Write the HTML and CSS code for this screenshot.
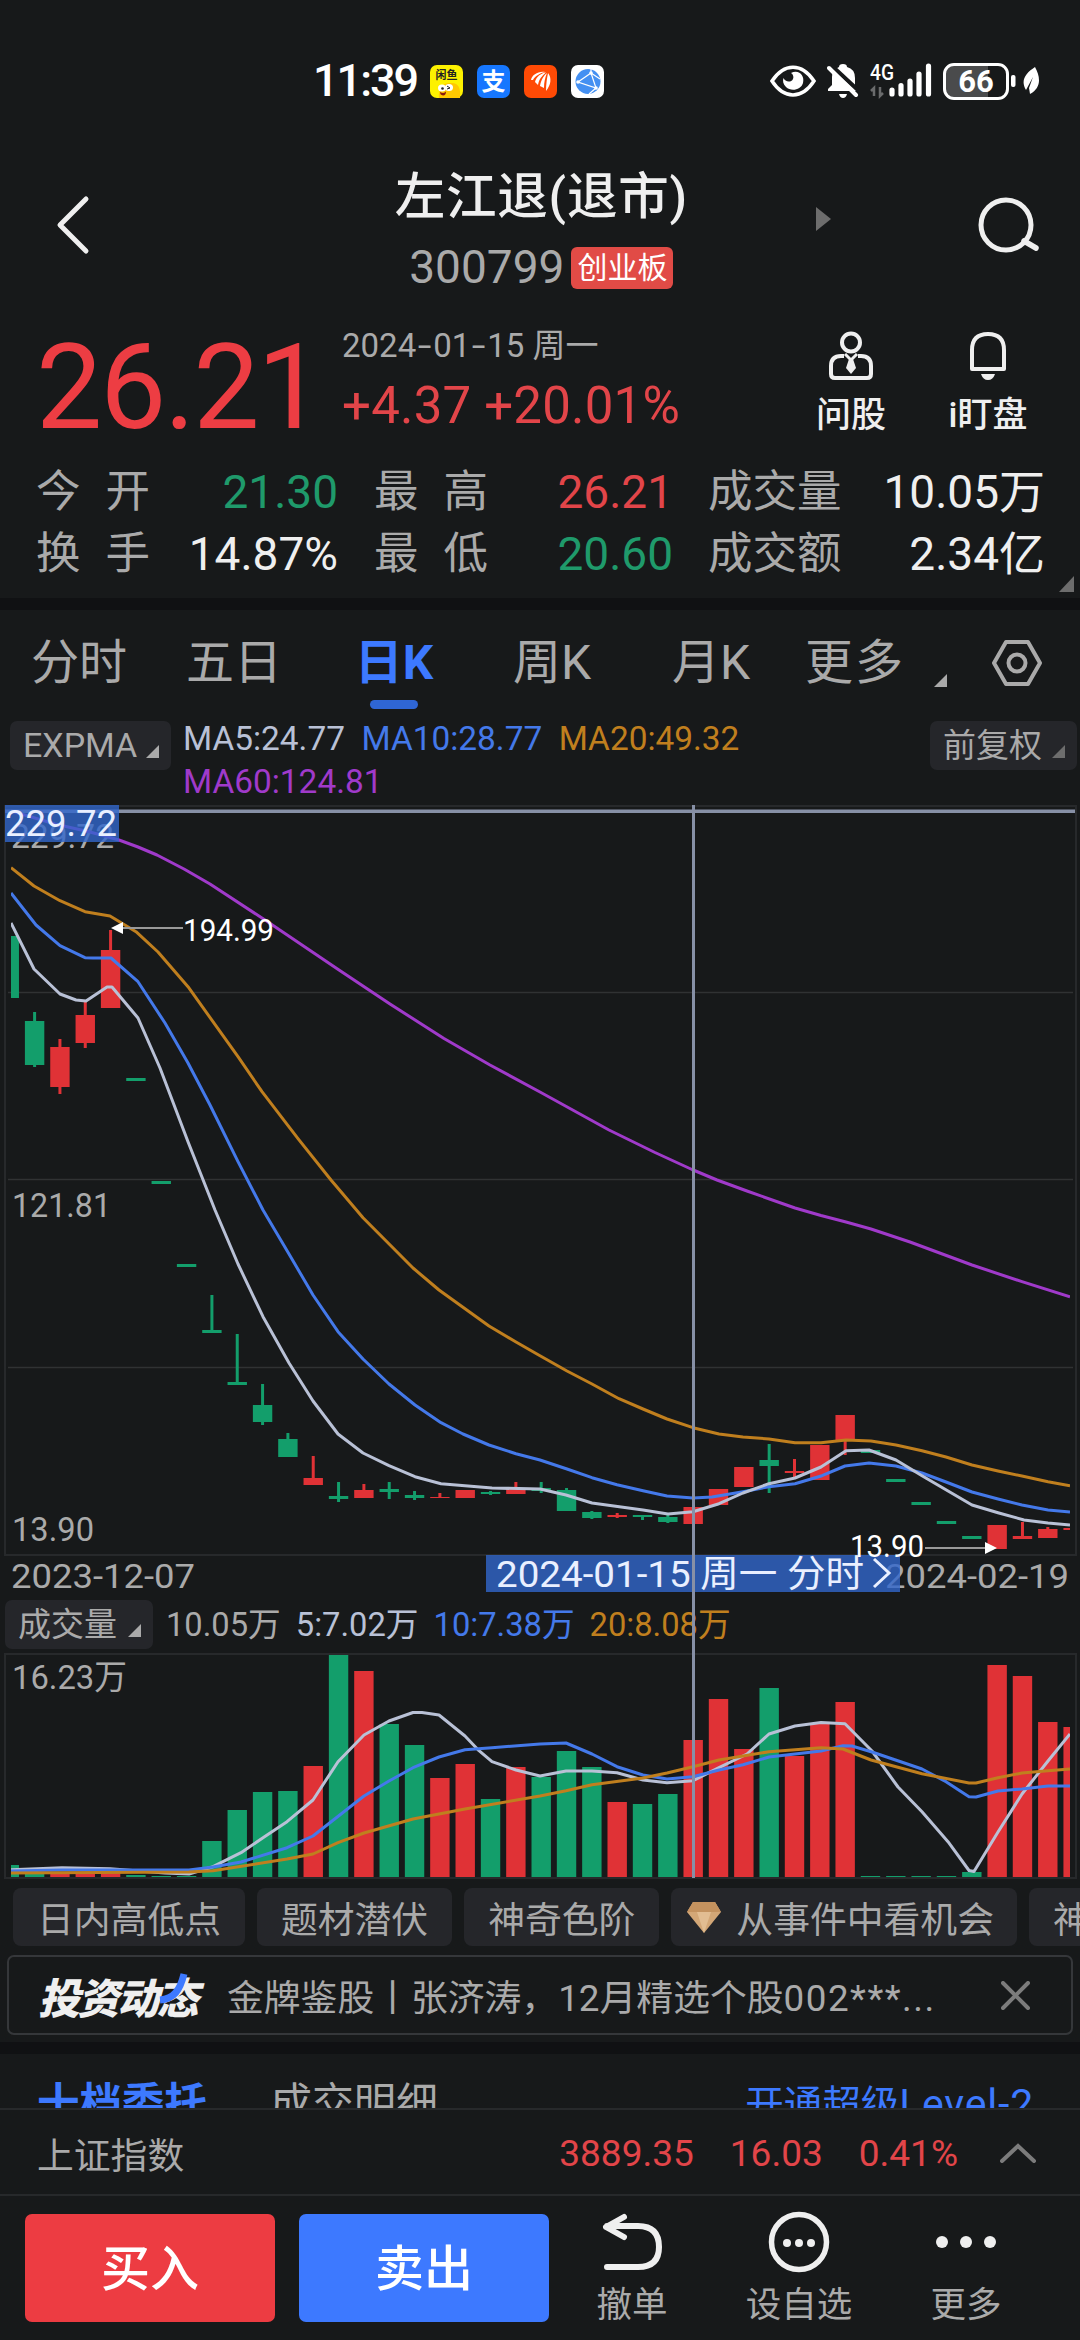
FILE: index.html
```html
<!DOCTYPE html>
<html lang="zh-CN">
<head>
    <meta charset="utf-8">
    <meta name="viewport" content="width=device-width, initial-scale=1.0">
    <title>左江退 300799</title>
    <link rel="stylesheet" href="styles.css">
</head>
<body>
<div class="statusbar">
    <div class="clock">11:39</div>
    <div class="apps">
        <svg width="33" height="33" viewBox="0 0 33 33">
            <rect width="33" height="33" rx="7" fill="#fdf100"/>
            <path d="M9 33C8 24 12 18 20 18C28 17 31 22 30 33Z" fill="#ffc800"/>
            <text x="5.5" y="14" class="xy" textLength="22">闲鱼</text>
            <ellipse cx="12" cy="23" rx="4" ry="3.6" fill="#fff"/><ellipse cx="19" cy="22.5" rx="4" ry="3.6" fill="#fff"/>
            <circle cx="12.5" cy="23.5" r="1.3" fill="#222"/><path d="M17 21l3 2-3 1" stroke="#222" fill="none"/>
            <path d="M10 27q4 2 6-.5q0 4-3 4q-3-.5-3-3.5" fill="#8a1a10"/>
        </svg>
        <svg width="33" height="33" viewBox="0 0 33 33">
            <rect width="33" height="33" rx="7" fill="#1677ff"/>
            <text x="4.5" y="25" class="zfb">支</text>
        </svg>
        <svg width="33" height="33" viewBox="0 0 33 33">
            <rect width="33" height="33" rx="7" fill="#ff4a05"/>
            <path d="M7 15C8 10 14 6 21 7C16 8 11 11 9 15ZM11 17C12 12 17 8 22 7.5C18 11 15 14 14 20ZM16 21C17 15 20 10 23 8C21 13 20 17 20 23ZM22 26C22 19 23 13 24 8C28 13 27 20 22 26Z" fill="#fff"/>
        </svg>
        <svg width="33" height="33" viewBox="0 0 33 33">
            <rect width="33" height="33" rx="7" fill="#fff"/>
            <circle cx="17" cy="16.5" r="12.5" fill="#4490f2"/>
            <path d="M7 17L20 8L25 23Z M20 4V8L29 14M25 23L18 29" fill="none" stroke="#fff" stroke-width="1.2"/>
            <circle cx="7" cy="17" r="1.8" fill="#fff"/><circle cx="20" cy="8" r="1.8" fill="#fff"/><circle cx="25" cy="23" r="1.8" fill="#fff"/>
        </svg>
    </div>
    <div class="sysicons">
        <svg width="46" height="32" viewBox="0 0 46 32">
            <path d="M2 16C14-2.5 32-2.5 44 16C32 34.5 14 34.5 2 16Z" fill="none" stroke="#fff" stroke-width="3.5"/>
            <path d="M21 8C29 4 35 11 33 18C31 25 21 27 16 22C13 19 12.5 16 13.5 13C15 17 21 18 23 14C24 12 23 9 21 8Z" fill="#fff"/>
        </svg>
        <svg class="mute" width="32" height="36" viewBox="0 0 32 36">
            <path d="M12 4Q12 1 16 1Q20 1 20 4Q28 6 28 15V24L31 28H1V26L5 22V14Q5 7 12 4Z" fill="#fff"/>
            <path d="M12 31H20Q19 35 16 35Q13 35 12 31Z" fill="#fff"/>
            <path d="M4 2L33 29" stroke="#17191a" stroke-width="4"/>
            <path d="M2 5L29 32" stroke="#fff" stroke-width="4" stroke-linecap="round"/>
        </svg>
        <svg class="signal" width="64" height="36" viewBox="0 0 64 36">
            <text x="0" y="17" class="net" textLength="24" lengthAdjust="spacingAndGlyphs">4G</text>
            <path d="M4 33V25L1 28M10 24V33L13 30" fill="none" stroke="#6a6b6c" stroke-width="2.5"/>
            <path d="M22 27V31M31 22.5V31M40 18V31M49 11V31M58.5 3V31" stroke="#fff" stroke-width="5.2" stroke-linecap="round"/>
        </svg>
        <div class="battery">66</div>
        <svg class="nub" width="5" height="12"><rect width="4.5" height="12" rx="2" fill="#fff"/></svg>
        <svg width="18" height="30" viewBox="0 0 18 30">
            <path d="M13 1C19 12 19 22 8 28L7 22L11 11L4 24C-2 14 4 7 13 1Z" fill="#fff"/>
        </svg>
    </div>
</div>

<div class="header">
    <svg class="back" width="34" height="60" viewBox="0 0 34 60"><path d="M30 4L4 30L30 56" fill="none" stroke="#efefef" stroke-width="5" stroke-linecap="round" stroke-linejoin="round"/></svg>
    <div class="heading">
        <div class="name">左江退(退市)</div>
        <div class="code">300799<span class="board">创业板</span></div>
    </div>
    <svg class="next" width="15" height="24"><path d="M0 0L15 12L0 24Z" fill="#6d6d6d"/></svg>
    <svg class="search" width="62" height="60" viewBox="0 0 62 60"><circle cx="28" cy="30" r="25" fill="none" stroke="#efefef" stroke-width="5"/><path d="M46 46L58 53" stroke="#efefef" stroke-width="5.5" stroke-linecap="round"/></svg>
</div>

<div class="quote">
    <div class="price">26.21</div>
    <div class="change">
        <div class="date">2024<i>-</i>01<i>-</i>15 周一</div>
        <div class="diff">+4.37 +20.01%</div>
    </div>
    <div class="action ask">
        <svg width="46" height="50" viewBox="0 0 46 50" fill="none" stroke="#efefef" stroke-width="4">
            <circle cx="23" cy="11.5" r="9"/>
            <path d="M16 25H13Q3 25 3 35V43Q3 47 7 47H39Q43 47 43 43V35Q43 25 33 25H30"/>
            <path d="M21 28H25L28 37L23 43L18 37Z" fill="#efefef" stroke="none"/>
            <path d="M17 23L23 29L29 23" stroke-width="3"/>
        </svg>
        <span>问股</span>
    </div>
    <div class="action watch">
        <svg width="46" height="50" viewBox="0 0 46 50" fill="none" stroke="#efefef" stroke-width="4">
            <path d="M7 38V19Q7 3 23 3Q39 3 39 19V38Z" stroke-linejoin="round"/>
            <path d="M16 43H30Q28 49 23 49Q18 49 16 43Z" fill="#efefef" stroke="none"/>
        </svg>
        <span>i盯盘</span>
    </div>
</div>

<div class="stats">
    <div><label class="two">今开</label><b class="down">21.30</b></div>
    <div><label class="two">最高</label><b class="up">26.21</b></div>
    <div><label>成交量</label><b>10.05万</b></div>
    <div><label class="two">换手</label><b>14.87%</b></div>
    <div><label class="two">最低</label><b class="down">20.60</b></div>
    <div><label>成交额</label><b>2.34亿</b></div>
    <svg class="corner" width="15" height="16"><path d="M15 0V16H0Z" fill="#6d6d6d"/></svg>
</div>
<div class="band"></div>

<div class="tabs">
    <div>分时</div>
    <div>五日</div>
    <div class="on">日K</div>
    <div>周K</div>
    <div>月K</div>
    <div class="more">更多</div>
    <svg class="tri" width="13" height="13"><path d="M13 0V13H0Z" fill="#aaa"/></svg>
    <svg width="50" height="48" viewBox="0 0 50 48" fill="none" stroke="#aaa" stroke-width="4">
        <path d="M14 3H36L48 24L36 45H14L2 24Z" stroke-linejoin="round"/><circle cx="25" cy="24" r="8.5"/>
    </svg>
</div>

<div class="indicators">
    <div class="chip">EXPMA<svg width="13" height="13"><path d="M13 0V13H0Z" fill="#aaa"/></svg></div>
    <div class="ma">
        <span class="c5">MA5:24.77</span><span class="c10">MA10:28.77</span><span class="c20">MA20:49.32</span><br>
        <span class="c60">MA60:124.81</span>
    </div>
    <div class="chip adj">前复权<svg width="13" height="13"><path d="M13 0V13H0Z" fill="#6d6d6d"/></svg></div>
</div>

<div class="charts">
    <svg id="kline" width="1080" height="800" viewBox="0 797 1080 800"></svg>
    <div class="volhead">
        <div class="chip">成交量<svg width="13" height="13"><path d="M13 0V13H0Z" fill="#aaa"/></svg></div>
        <span class="v">10.05万</span><span class="c5">5:7.02万</span><span class="c10">10:7.38万</span><span class="c20">20:8.08万</span>
    </div>
    <svg id="volume" width="1080" height="232" viewBox="0 1650 1080 232"></svg>
    <div class="cross"></div>
</div>

<div class="tags">
    <div>日内高低点</div>
    <div>题材潜伏</div>
    <div>神奇色阶</div>
    <div class="gem"><svg width="34" height="31" viewBox="0 0 34 31"><path d="M6 0H28L34 10L17 31L0 10Z" fill="#d3a777"/><path d="M6 0H28L34 10H0Z" fill="#c4925f"/><path d="M10 10H24L17 31Z" fill="#e2bd92"/></svg>从事件中看机会</div>
    <div>神奇九转</div>
</div>

<div class="notice">
    <div class="logo">投资动态<svg width="36" height="48" viewBox="0 0 36 48"><path d="M28 2C24 18 18 27 4 28" fill="none" stroke="#3d79ff" stroke-width="7"/></svg></div>
    <div class="news">金牌鉴股丨张济涛，12月精选个股<span>002***...</span></div>
    <svg width="29" height="29" viewBox="0 0 29 29"><path d="M2 2L27 27M27 2L2 27" stroke="#7c7c7c" stroke-width="4" stroke-linecap="round"/></svg>
</div>
<div class="band band2"></div>

<div class="depth">
    <div class="on">十档委托</div>
    <div>成交明细</div>
    <div class="level">开通超级<span>Level-2</span></div>
</div>

<div class="index">
    <div class="label">上证指数</div>
    <div class="n1">3889.35</div>
    <div class="n2">16.03</div>
    <div class="n3">0.41%</div>
    <svg width="36" height="20" viewBox="0 0 36 20"><path d="M2 18L18 3L34 18" fill="none" stroke="#7c7c7c" stroke-width="4" stroke-linecap="round"/></svg>
</div>

<div class="trade">
    <div class="btn buy">买入</div>
    <div class="btn sell">卖出</div>
    <div class="op">
        <svg width="60" height="62" viewBox="0 0 60 62" fill="none" stroke="#efefef" stroke-width="6" stroke-linecap="round" stroke-linejoin="round"><path d="M22 6L4 16L22 26M5 15H36Q57 15 57 36Q57 56 36 56H5"/></svg>
        <span>撤单</span>
    </div>
    <div class="op opt">
        <svg width="62" height="62" viewBox="0 0 62 62"><circle cx="31" cy="31" r="27.5" fill="none" stroke="#efefef" stroke-width="5.5"/><g fill="#efefef"><circle cx="19" cy="32" r="4"/><circle cx="31" cy="32" r="4"/><circle cx="43" cy="32" r="4"/></g></svg>
        <span>设自选</span>
    </div>
    <div class="op">
        <svg width="62" height="62" viewBox="0 0 62 62" fill="#efefef"><circle cx="7" cy="31" r="6"/><circle cx="31" cy="31" r="6"/><circle cx="55" cy="31" r="6"/></svg>
        <span>更多</span>
    </div>
</div>
<script src="chart.js"></script>
</body>
</html>
```
FILE: styles.css
```css
*{
    box-sizing: border-box;
}
body{
    margin: 0;
    width: 1080px;
    height: 2340px;
    overflow: hidden;
    background-color: #17191a;
    color: #efefef;
    font-family: Roboto, "Noto Sans CJK SC", sans-serif;
}
svg{
    display: block;
    flex: none;
}
div, span, label, b{
    white-space: nowrap;
}
.up{ color: #e24549; }
.down{ color: #1f9a6b; }
.c5{ color: #b9c1d6; }
.c10{ color: #4479ea; }
.c20{ color: #c07f1e; }
.c60{ color: #a03aca; }

/* status bar */
.statusbar{
    height: 162px;
    display: flex;
    align-items: center;
    padding-left: 313px;
    color: #fff;
}
.clock{
    width: 117px;
    font-size: 45px;
    font-weight: 500;
    line-height: 60px;
    letter-spacing: -2px;
}
.apps{
    display: flex;
    gap: 14px;
}
.xy{
    font: bold 11px "Noto Sans CJK SC", sans-serif;
    fill: #222;
}
.zfb{
    font: bold 24px "Noto Sans CJK SC", sans-serif;
    fill: #fff;
}
.sysicons{
    display: flex;
    align-items: center;
    margin-left: 166px;
}
.mute{ margin-left: 11px; }
.signal{ margin-left: 11px; }
.net{
    font: 500 22px Roboto, sans-serif;
    fill: #fff;
}
.battery{
    width: 66px;
    height: 37px;
    margin-left: 9px;
    border: 3px solid #fff;
    border-radius: 11px;
    background: linear-gradient(90deg, #4a4b4c 70%, #17191a 70%);
    text-align: center;
    font-size: 31px;
    font-weight: 700;
    line-height: 31px;
}
.nub{ margin: 0 6px 0 2px; }

/* header */
.header{
    height: 158px;
    position: relative;
    display: flex;
    justify-content: space-between;
    padding: 0 40px 0 56px;
}
.back, .search{ margin-top: 33px; }
.heading{
    width: 300px;
    margin-left: 299px;
}
.name{
    font-size: 50.5px;
    font-weight: 500;
    line-height: 69px;
    text-align: center;
    letter-spacing: 0.8px;
}
.code{
    display: flex;
    align-items: center;
    justify-content: center;
    margin-top: 15px;
    color: #aaa;
    font-size: 46px;
    line-height: 43px;
    gap: 7px;
}
.board{
    width: 102px;
    height: 42px;
    border-radius: 6px;
    background-color: #e14b46;
    color: #fff;
    font-size: 30px;
    text-align: center;
    line-height: 41px;
}
.next{
    margin: 45px 0 0 122px;
}
.search{ margin-left: 145px; }

/* quote */
.quote{
    display: flex;
    height: 138px;
    padding-left: 36px;
}
.price{
    width: 306px;
    font-size: 118px;
    letter-spacing: -2.2px;
    line-height: 137px;
    color: #ed3d43;
}
.change{ width: 454px; }
.date{
    margin-top: 5px;
    color: #aaa;
    font-size: 33px;
    line-height: 42px;
}
.date i{
    display: inline-block;
    width: 17px;
    transform: scaleX(1.5);
    font-style: normal;
    text-align: center;
}
.diff{
    color: #e24549;
    font-size: 51px;
    line-height: 78px;
    letter-spacing: 0.2px;
}
.action{
    display: flex;
    flex-direction: column;
    align-items: center;
    width: 110px;
    padding-top: 11px;
    font-size: 35px;
    font-weight: 500;
}
.watch{ margin-left: 27px; }
.action span{
    margin-top: 4px;
    line-height: 62px;
}
.stats{
    position: relative;
    height: 140px;
    padding: 3px 0 0 36px;
    display: grid;
    grid-template-columns: 302px 298px 334px;
    grid-template-rows: 62px 62px;
    column-gap: 36px;
}
.stats > div{
    display: flex;
    justify-content: space-between;
    font-size: 46px;
    line-height: 62px;
}
.stats > div:nth-child(3n){ width: 337px; }
.stats > div:nth-child(3n+2){ width: 299px; }
.stats label{
    color: #aaa;
    font-size: 44.5px;
}
.stats .two{ letter-spacing: 25px; }
.stats b{ font-weight: 400; }
.corner{
    position: absolute;
    right: 6px;
    bottom: 6px;
}
.band{
    height: 12px;
    background-color: #101113;
}

/* period tabs */
.tabs{
    display: grid;
    grid-template-columns: 158px 152px 172px 140px 178px 110px 60px 93px;
    height: 105px;
    justify-items: center;
    align-items: center;
    color: #aaa;
    font-size: 48px;
}
.tabs > div{
    line-height: 106px;
}
.tabs .more{ letter-spacing: 2px; }
.tabs .on{
    position: relative;
    left: -2px;
    color: #3d79ff;
    font-weight: 700;
}
.tabs .on::after{
    content: "";
    position: absolute;
    left: 50%;
    bottom: 7px;
    width: 48px;
    height: 9px;
    margin-left: -24px;
    border-radius: 5px;
    background-color: #2f66d4;
}
.tabs .tri{ margin-top: 34px; }

.indicators{
    display: flex;
    height: 82px;
    padding: 0 3px 0 10px;
}
.chip{
    display: flex;
    align-items: center;
    justify-content: space-between;
    width: 161px;
    height: 49px;
    margin-top: 6px;
    padding: 0 12px 0 13px;
    border-radius: 7px;
    background-color: #25262a;
    color: #aaa;
    font-size: 34px;
    line-height: 49px;
}
.chip svg{ margin-top: 12px; }
.ma{
    flex: 1;
    margin-left: 12px;
    padding-top: 2px;
    font-size: 33.4px;
    line-height: 43px;
}
.ma span{ margin-right: 16.5px; }
.adj{ width: 147px; font-size: 33px; }

/* charts */
.charts{ position: relative; }
.charts text{
    font-size: 34px;
    fill: #aaa;
}
.charts .mark{
    font-size: 31px;
    fill: #fff;
}
.charts .hl{
    font-size: 37px;
    fill: #e9efff;
}
.frame{
    fill: none;
    stroke: #27292b;
    stroke-width: 2;
}
.grid{
    stroke: #303233;
    stroke-width: 1.5;
}
.line{
    fill: none;
    stroke-width: 3;
    stroke-linejoin: round;
}
.badge{
    fill: #3267cc;
    fill-opacity: .8;
}
.volhead{
    display: flex;
    height: 53px;
    padding: 3px 0 0 5px;
    font-size: 32.7px;
    line-height: 51px;
}
.volhead .chip{
    width: 148px;
    height: 49px;
    margin: 0 13px 0 0;
    font-size: 33px;
}
.volhead .v{ color: #aaa; }
.volhead span{ margin-right: 15px; }
.cross{
    position: absolute;
    left: 692px;
    top: 8px;
    width: 3px;
    height: 1073px;
    background-color: #8790a6;
}

/* strategy tags */
.tags{
    display: flex;
    gap: 12px;
    padding: 6px 0 0 13px;
    overflow: hidden;
}
.tags > div{
    display: flex;
    align-items: center;
    flex: none;
    height: 58px;
    padding: 0 24px;
    border-radius: 8px;
    background-color: #25262a;
    color: #aaa;
    font-size: 36.8px;
}
.tags .gem{
    gap: 15px;
    padding: 0 23px 0 16px;
}
.notice{
    display: flex;
    align-items: center;
    height: 80px;
    margin: 9px 7px 7px;
    padding: 0 41px 0 29px;
    border: 2px solid #35373a;
    border-radius: 7px;
    color: #aaa;
    font-size: 36.8px;
}
.logo{
    position: relative;
    width: 189px;
    color: #efefef;
    font-size: 42px;
    font-weight: 900;
    font-style: italic;
    letter-spacing: -2.5px;
}
.logo svg{
    position: absolute;
    left: 118px;
    top: 7px;
}
.news{ flex: 1; }
.news span{ letter-spacing: 1.5px; }

.depth{
    display: flex;
    height: 54px;
    overflow: hidden;
    padding: 22px 46px 0 37px;
    color: #aaa;
    font-size: 42px;
    line-height: 56px;
}
.depth .on{
    margin-right: 63px;
    color: #3d79ff;
    font-size: 42.5px;
    font-weight: 700;
}
.level{
    margin-left: auto;
    color: #3d79ff;
    font-size: 38.5px;
}
.level span{
    font-size: 41px;
    letter-spacing: 0.8px;
}
.index{
    display: flex;
    align-items: center;
    height: 88px;
    padding: 2px 44px 0 37px;
    border-top: 2px solid #27292b;
    border-bottom: 2px solid #27292b;
    color: #e24549;
    font-size: 37px;
}
.label{
    flex: 1;
    color: #aaa;
    font-size: 36.8px;
}
.n2{ margin: 0 36px; }
.n3{ margin-right: 42px; }

.trade{
    display: flex;
    height: 144px;
    padding: 15px 0 0 25px;
}
.btn{
    width: 250px;
    height: 108px;
    margin: 3px 24px 0 0;
    border-radius: 7px;
    background-color: #ed3c42;
    color: #fff;
    font-size: 49px;
    font-weight: 500;
    line-height: 111px;
    text-align: center;
}
.sell{ background-color: #3d79ff; }
.op{
    width: 118px;
    display: flex;
    flex-direction: column;
    align-items: center;
    color: #aaa;
    font-size: 35.5px;
    line-height: 64px;
}
.opt{ margin: 0 49px; }
```
FILE: chart.js
```js
var RED = '#e03236', GREEN = '#139e6b';
var BASE = 1877;
// body top, body bottom, wick top, wick bottom, volume top, 1 = up
var days = [
    [936,998,936,998,1865,0],[1021,1065,1012,1067,1873,0],[1047,1087,1039,1094,1873,1],[1015,1043,1000,1048,1873,1],
    [950,1008,930,1008,1873,1],[1078,1081,1078,1081,1875,0],[1181,1184,1181,1184,1876,0],[1264,1267,1264,1267,1876,0],
    [1330,1333,1295,1333,1841,0],[1382,1385,1334,1385,1810,0],[1405,1422,1384,1425,1792,0],[1439,1457,1433,1457,1791,0],
    [1478,1485,1456,1485,1766,1],[1496,1499,1482,1502,1655,0],[1490,1498,1484,1498,1671,1],[1489,1492,1482,1499,1724,0],
    [1495,1498,1491,1500,1745,0],[1497,1498,1493,1498,1778,1],[1490,1498,1490,1498,1764,1],[1492,1494,1491,1495,1799,0],
    [1489,1494,1482,1494,1767,1],[1488,1491,1482,1493,1777,0],[1490,1511,1488,1511,1751,0],[1512,1518,1511,1519,1767,0],
    [1515,1517,1513,1518,1802,1],[1515,1517,1515,1520,1804,0],[1517,1522,1515,1523,1794,0],[1507,1524,1507,1524,1740,1],
    [1489,1505,1489,1505,1699,1],[1467,1487,1467,1487,1749,1],[1460,1466,1444,1493,1688,0],[1471,1473,1459,1477,1756,1],
    [1445,1480,1445,1480,1724,1],[1415,1440,1415,1455,1702,1],[1450,1453,1450,1453,1876,0],[1479,1482,1479,1482,1876,0],
    [1502,1505,1502,1505,1876,0],[1521,1524,1521,1524,1876,0],[1536,1539,1536,1539,1872,0],[1525,1549,1525,1549,1665,1],
    [1536,1539,1522,1539,1676,1],[1529,1538,1527,1538,1722,1],[1528,1530,1528,1530,1727,1]
];
var ma60 = '11,811 55,824 90,832 119,840 138,847 157,855 184,869 210,884 265,920 339,970 390,1004 444,1038.5 490,1065 540,1092 609,1130 655,1152.5 692,1169.5 717,1180 747,1191 795,1208 821,1215.5 846,1222 871,1229 910,1242 972,1265 1022,1281.7 1070,1296.7';
var ma20 = '11,867.7 34,886 60,900.7 85,911.7 110,916 136,931.7 158,952 188,986.7 238,1056.7 262,1091.7 298,1138.7 331,1180 363,1217.7 413,1268 439,1290 489,1326 516,1342 540,1355.7 567,1371 592,1384 619,1398.7 643,1409 667,1419 693,1427.7 719,1434 743,1437 769,1439 795,1442.7 821,1442.7 846,1440 871,1441 896,1445 922,1450.7 946,1457 972,1465 998,1471 1022,1476 1048,1481.7 1070,1485.7';
var ma10 = '11,893 36,925 60,945.7 85,957.7 93,958 111,958 138,981.7 165,1023 188,1063 210,1105 238,1161.7 263,1210 289,1254 313,1295 338,1331.7 363,1359 389,1384 415,1405 441,1422.7 463,1434 489,1445 516,1453.7 540,1460 567,1469 592,1477.7 617,1484.7 643,1490.7 667,1496 693,1498 712,1497 743,1491.7 769,1486.7 795,1483.7 822,1475.7 845,1466 869,1463 896,1466 922,1473 946,1482 972,1492 998,1499 1022,1505 1048,1510 1070,1512';
var ma5 = '11,923 34,969 60,994 76,1000 86,1001 107,987 112,987 138,1018 160,1068 188,1141.7 215,1210 238,1264 263,1316.7 289,1363 313,1401 338,1434 363,1453 389,1465.7 415,1476.7 441,1483.7 492,1488 540,1489 566,1495 592,1503 643,1510 668,1514 693,1511.7 719,1503.7 743,1493 769,1483.7 795,1478 821,1467 846,1450.7 869,1450 896,1460 922,1475.7 972,1505 998,1512.7 1024,1520 1048,1523 1070,1525';
var v5 = '11,1869.7 62,1867.7 110,1868.7 165,1873 189,1874 213,1866.7 241,1852.7 263,1837.7 287,1821.7 313,1800 338,1761.7 364,1735 389,1721 413,1712.5 422,1712.5 439,1715 465,1736 479,1750.7 492,1761.7 516,1770 540,1776 566,1771 592,1771 617,1772.7 643,1780 667,1782.7 693,1780.7 719,1767.7 747,1754 769,1734 795,1726 821,1722.5 845,1723.7 872,1751 898,1787 922,1811.7 948,1841.7 969,1870.5 974,1871.5 998,1832 1022,1794 1048,1761 1070,1734';
var v10 = '11,1871 62,1870 189,1870 213,1867 241,1862 287,1847.7 313,1836 364,1796 389,1781 413,1767.7 439,1757 465,1749.7 492,1747.7 540,1744 566,1743 592,1754 617,1766.7 643,1775 667,1779 693,1776.7 719,1770 743,1764.7 769,1757 795,1754 821,1751 843,1745.7 852,1746 872,1752 922,1769 946,1781.7 969,1796.7 976,1797 998,1791 1022,1789 1048,1786 1070,1786';
var v20 = '11,1873 189,1872 213,1870.7 287,1859 313,1854 338,1842.7 364,1833 413,1819 465,1809 540,1796 566,1790.7 592,1784.7 643,1778 667,1773 693,1766.7 719,1760 769,1751.7 821,1747.7 843,1749 871,1760 922,1773.7 969,1783 976,1783 998,1777.7 1022,1773 1048,1770.7 1070,1769';

function rect(x, y, w, h, fill){
    return '<rect x="' + x + '" y="' + y + '" width="' + w + '" height="' + h + '" fill="' + fill + '"/>';
}
function line(points, color){
    return '<polyline class="line" points="' + points + '" stroke="' + color + '"/>';
}
function text(x, y, len, str, cls){
    return '<text x="' + x + '" y="' + y + '" textLength="' + len + '" lengthAdjust="spacingAndGlyphs" class="' + (cls || '') + '">' + str + '</text>';
}
function center(i){
    return 34.6 + 25.33 * (i - 1);
}

function drawKline(){
    var out = '<clipPath id="ck"><rect x="11" y="797" width="1059" height="800"/></clipPath>';
    out += '<rect class="frame" x="5" y="806" width="1071" height="749"/>';
    [992.5, 1179.5, 1367.5].forEach(function(y){
        out += '<path class="grid" d="M8 ' + y + 'H1073"/>';
    });
    out += text(11, 848, 103, '229.72') + text(12, 1217, 99, '121.81') + text(12, 1541, 82, '13.90');
    out += '<g clip-path="url(#ck)">';
    days.forEach(function(d, i){
        var c = center(i), color = d[5] ? RED : GREEN;
        out += rect(c - 1.5, d[2], 3, d[3] - d[2], color);
        out += rect(c - 9.7, d[0], 19.4, d[1] - d[0], color);
    });
    out += line(ma60, '#a03aca') + line(ma20, '#c07f1e') + line(ma10, '#4479ea') + line(ma5, '#b9c1d6');
    out += '</g>';
    out += rect(5, 809.5, 1070, 3.5, '#8790a6');
    out += '<rect class="badge" x="5" y="805" width="114" height="37"/>' + text(5, 836, 112, '229.72', 'hl');
    out += '<path d="M122 928H183" stroke="#999" stroke-width="2"/><path d="M111 928L123 922V934Z" fill="#fff"/>';
    out += text(183, 941, 91, '194.99', 'mark');
    out += text(11, 1588, 184, '2023-12-07') + text(885, 1588, 184, '2024-02-19');
    out += '<rect class="badge" x="486" y="1555" width="414" height="37"/>';
    out += text(496, 1587, 368, '2024-01-15 周一 分时', 'hl');
    out += '<path d="M874 1559L889 1573L874 1587" fill="none" stroke="#e9efff" stroke-width="3"/>';
    out += text(850, 1557, 74, '13.90', 'mark');
    out += '<path d="M925 1548H986" stroke="#999" stroke-width="2"/><path d="M997 1548L985 1542V1554Z" fill="#fff"/>';
    document.getElementById('kline').innerHTML = out;
}

function drawVolume(){
    var out = '<clipPath id="cv"><rect x="11" y="1650" width="1059" height="232"/></clipPath>';
    out += '<rect class="frame" x="5" y="1654" width="1071" height="224"/>';
    out += text(12, 1689, 115, '16.23万');
    out += '<g clip-path="url(#cv)">';
    days.forEach(function(d, i){
        out += rect(center(i) - 9.7, d[4], 19.4, BASE - d[4], d[5] ? RED : GREEN);
    });
    out += line(v5, '#b9c1d6') + line(v10, '#4479ea') + line(v20, '#c07f1e') + '</g>';
    document.getElementById('volume').innerHTML = out;
}

drawKline();
drawVolume();
```
